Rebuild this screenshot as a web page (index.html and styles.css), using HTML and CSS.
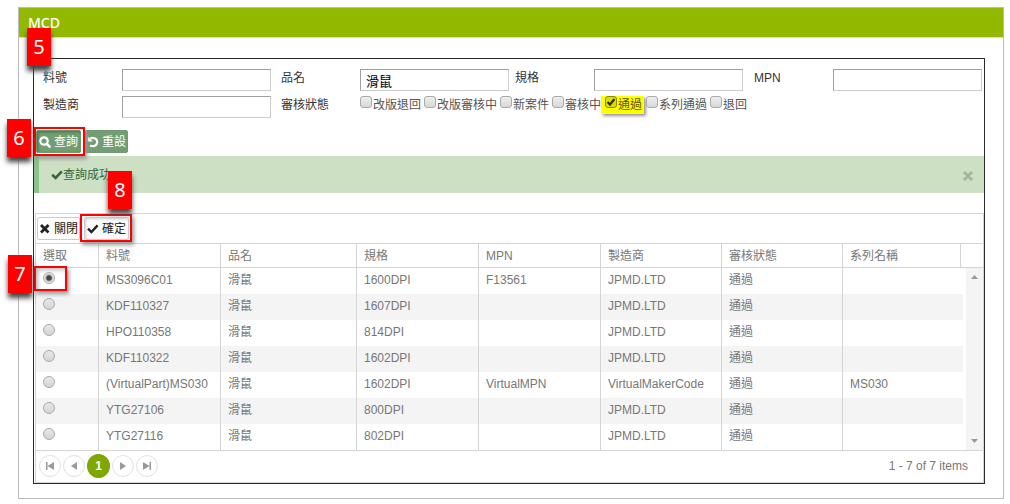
FILE: index.html
```html
<!DOCTYPE html>
<html lang="zh-Hant">
<head>
<meta charset="utf-8">
<title>MCD</title>
<link rel="stylesheet" href="styles.css">
</head>
<body>
<main class="panel">
  <h1 class="panel-title">MCD</h1>
  <span class="step step-5">5</span>
  <div class="panel-body">
    <div class="frame">
      <form class="search">
        <label for="part">料號</label><input class="text" id="part" type="text">
        <label for="name">品名</label><input class="text" id="name" type="text" value="滑鼠">
        <label for="spec">規格</label><input class="text" id="spec" type="text">
        <label for="mpn">MPN</label><input class="text" id="mpn" type="text">
        <label for="maker">製造商</label><input class="text" id="maker" type="text">
        <span id="status-label">審核狀態</span>
        <div class="checks" role="group" aria-labelledby="status-label">
          <label class="check"><input type="checkbox">改版退回</label>
          <label class="check"><input type="checkbox">改版審核中</label>
          <label class="check"><input type="checkbox">新案件</label>
          <label class="check"><input type="checkbox">審核中</label>
          <label class="check marked"><input type="checkbox" checked>通過</label>
          <label class="check"><input type="checkbox">系列通過</label>
          <label class="check"><input type="checkbox">退回</label>
        </div>
      </form>
      <div class="actions">
        <div class="anchor">
          <button class="btn green roomy" type="button"><svg class="icon" viewBox="0 0 12 12"><circle cx="5" cy="5" r="3.7" fill="none" stroke="currentColor" stroke-width="2.2"/><path d="M7.800 7.800l2.800 2.800" stroke="currentColor" stroke-width="2.600" stroke-linecap="round"/></svg>查詢</button>
          <span class="ring"></span><span class="step step-6">6</span>
        </div>
        <button class="btn green" type="button"><svg class="icon" viewBox="0 0 12 12"><path d="M3 2.600C5.700.9 10.200 2 10.200 6c0 3.600-3.800 5-7.200 3.500" fill="none" stroke="currentColor" stroke-width="2.200"/><path d="M.8.6v5h5z" fill="currentColor"/></svg>重設</button>
      </div>
      <div class="alert" role="status">
        <svg class="icon" viewBox="0 0 12 12"><path d="M1.200 5.700l3.400 3.300 6.200-6.600" fill="none" stroke="currentColor" stroke-width="2.600"/></svg>
        <span class="alert-text">查詢成功</span>
        <button class="close" type="button" aria-label="關閉訊息"><svg class="icon" viewBox="0 0 12 12"><path d="M2 2l8 8M10 2l-8 8" stroke="currentColor" stroke-width="2.800"/></svg></button>
      </div>
      <section class="grid">
        <div class="toolbar">
          <button class="btn white" type="button"><svg class="icon" viewBox="0 0 12 12"><path d="M2 2l7.500 7.500M9.500 2L2 9.500" stroke="currentColor" stroke-width="2.800"/></svg>關閉</button>
          <div class="anchor">
            <button class="btn white roomy" type="button"><svg class="icon" viewBox="0 0 12 12"><path d="M1 5.700l3.400 3.300 6.200-6.600" fill="none" stroke="currentColor" stroke-width="2.400"/></svg>確定</button>
            <span class="ring ring-ok"></span><span class="step step-8">8</span>
          </div>
        </div>
        <div class="grid-head">
          <table>
            <colgroup><col class="c-pick"><col class="c-part"><col class="c-name"><col class="c-mid"><col class="c-mid"><col class="c-low"><col class="c-low"><col></colgroup>
            <thead><tr><th>選取</th><th>料號</th><th>品名</th><th>規格</th><th>MPN</th><th>製造商</th><th>審核狀態</th><th>系列名稱</th></tr></thead>
          </table>
        </div>
        <div class="grid-body">
          <table>
            <colgroup><col class="c-pick"><col class="c-part"><col class="c-name"><col class="c-mid"><col class="c-mid"><col class="c-low"><col class="c-low"><col></colgroup>
            <tbody>
              <tr><td><div class="pick"><input type="radio" name="row" aria-label="MS3096C01" checked><span class="ring ring-radio"></span><span class="step step-7">7</span></div></td><td>MS3096C01</td><td>滑鼠</td><td>1600DPI</td><td>F13561</td><td>JPMD.LTD</td><td>通過</td><td></td></tr>
              <tr><td><div class="pick"><input type="radio" name="row" aria-label="KDF110327"></div></td><td>KDF110327</td><td>滑鼠</td><td>1607DPI</td><td></td><td>JPMD.LTD</td><td>通過</td><td></td></tr>
              <tr><td><div class="pick"><input type="radio" name="row" aria-label="HPO110358"></div></td><td>HPO110358</td><td>滑鼠</td><td>814DPI</td><td></td><td>JPMD.LTD</td><td>通過</td><td></td></tr>
              <tr><td><div class="pick"><input type="radio" name="row" aria-label="KDF110322"></div></td><td>KDF110322</td><td>滑鼠</td><td>1602DPI</td><td></td><td>JPMD.LTD</td><td>通過</td><td></td></tr>
              <tr><td><div class="pick"><input type="radio" name="row" aria-label="(VirtualPart)MS030"></div></td><td>(VirtualPart)MS030</td><td>滑鼠</td><td>1602DPI</td><td>VirtualMPN</td><td>VirtualMakerCode</td><td>通過</td><td>MS030</td></tr>
              <tr><td><div class="pick"><input type="radio" name="row" aria-label="YTG27106"></div></td><td>YTG27106</td><td>滑鼠</td><td>800DPI</td><td></td><td>JPMD.LTD</td><td>通過</td><td></td></tr>
              <tr><td><div class="pick"><input type="radio" name="row" aria-label="YTG27116"></div></td><td>YTG27116</td><td>滑鼠</td><td>802DPI</td><td></td><td>JPMD.LTD</td><td>通過</td><td></td></tr>
            </tbody>
          </table>
          <div class="scrollbar">
            <svg viewBox="0 0 7 4"><path d="M0 4L3.500 0 7 4z" fill="#999"/></svg>
            <svg viewBox="0 0 7 4"><path d="M0 0l3.500 4L7 0z" fill="#999"/></svg>
          </div>
        </div>
        <nav class="pager">
          <button class="page" type="button" aria-label="First"><svg viewBox="0 0 10 8"><path d="M1 0h1.500v8H1zM9 0v8L2.500 4z"/></svg></button>
          <button class="page" type="button" aria-label="Previous"><svg viewBox="0 0 10 8"><path d="M8 0v8L2 4z"/></svg></button>
          <button class="page current" type="button">1</button>
          <button class="page" type="button" aria-label="Next"><svg viewBox="0 0 10 8"><path d="M2 0v8l6-4z"/></svg></button>
          <button class="page" type="button" aria-label="Last"><svg viewBox="0 0 10 8"><path d="M1 0v8l6.500-4zM7.500 0H9v8H7.500z"/></svg></button>
          <span class="count">1 - 7 of 7 items</span>
        </nav>
      </section>
    </div>
  </div>
</main>
</body>
</html>
```

FILE: styles.css
```css
* { box-sizing: border-box; }
body {
  margin: 0;
  padding: 7px 6px 5px 18px;
  background: #fff;
  color: #333;
  font: 12px/18px "Liberation Sans", "Noto Sans CJK TC", sans-serif;
}
button, input { font: inherit; margin: 0; }

.panel { position: relative; border: 1px solid #bbb; }
.panel-title {
  margin: 0;
  padding: 0 9px;
  background: #92b900;
  border-bottom: 1px solid #ddd;
  color: #fff;
  font: 500 14px/29px "Noto Sans", sans-serif;
}
.panel-body { padding: 20px 18px 14px 14px; }
.frame { border: 1px solid #2b2b2b; }

.search {
  display: grid;
  grid-template-columns: 79px 159fr 79px 155fr 79px 160fr 79px 149fr;
  row-gap: 5px;
  padding: 10px 2px 0 9px;
}
.text {
  width: 149px;
  height: 22px;
  padding: 1px 5px 0;
  border: 1px solid;
  border-color: #a0a0a0 #ccc #ccc #a0a0a0;
  background: #fff;
  color: #000;
  font-size: 13px;
}
.checks { grid-column: 4 / -1; display: flex; align-items: flex-start; gap: 3px; color: #555; }
.check { display: flex; align-items: flex-start; white-space: nowrap; }
.check input {
  appearance: none;
  width: 12px;
  height: 12px;
  margin-right: 1px;
  border: 1px solid #aaa;
  border-radius: 3px;
  background: linear-gradient(#eee, #d8d8d8);
}
.marked {
  margin: 0 -1px 0 -3px;
  padding: 0 2px 0 4px;
  background: #ff0;
  box-shadow: 2px 2px 3px #999;
  color: #555500;
}
.marked input {
  border-color: #8a8a00;
  background: #dddd00 url("data:image/svg+xml,%3Csvg xmlns='http://www.w3.org/2000/svg' viewBox='0 0 10 10'%3E%3Cpath d='M1.500 5l2.500 2.500L8.500 2' fill='none' stroke='%23333300' stroke-width='2.200'/%3E%3C/svg%3E");
}

.actions { display: flex; gap: 4px; padding: 12px 2px 3px; }
.anchor { position: relative; display: flex; }
.btn {
  display: flex;
  align-items: center;
  gap: 3px;
  height: 23px;
  padding: 0 1px;
  border: 1px solid;
  border-radius: 2px;
  white-space: nowrap;
}
.roomy { padding: 0 2px; }
.green { border-color: #6d9a6e; background: #739e73; color: #fff; }
.anchor .green { box-shadow: inset 1px 1px 3px #496b49; }
.icon { width: 12px; height: 12px; flex: none; }
.white { border-color: #ccc; background: #fff; color: #222; }
.anchor .white { box-shadow: inset 1px 1px 3px #ccc; }

.alert {
  display: flex;
  align-items: center;
  height: 37px;
  padding: 0 10px 0 12px;
  border-left: 5px solid #8ac38b;
  background: #cde0c4;
  color: #356635;
}
.close { margin-left: auto; padding: 2px 0 0; border: 0; background: none; color: #a2b49b; line-height: 0; }

.grid { margin: 20px 0 0 1px; border: 1px solid #d5d5d5; color: #777; }
.toolbar { display: flex; gap: 4px; padding: 3px 1px; }
.grid-head { padding-right: 22px; border: solid #d5d5d5; border-width: 1px 0; }
table { width: 100%; border-collapse: separate; border-spacing: 0; table-layout: fixed; }
.c-pick { width: 62px; }
.c-part { width: 122px; }
.c-name { width: 136px; }
.c-mid { width: 122px; }
.c-low { width: 121px; }
th, td { padding: 0 7px; border-left: 1px solid #d5d5d5; text-align: left; font-weight: 400; white-space: nowrap; }
th:first-child, td:first-child { border-left: 0; }
th:last-child { border-right: 1px solid #d5d5d5; }
th { height: 23px; }
td { height: 26px; padding-bottom: 2px; }
tr:nth-child(even) td { background: #f4f4f4; }
.pick { position: relative; display: flex; padding-bottom: 4px; }
.pick input {
  appearance: none;
  width: 12px;
  height: 12px;
  border: 1px solid #aaa;
  border-radius: 50%;
  background: linear-gradient(#e8e8e8, #d4d4d4);
}
.pick input:checked { background: radial-gradient(circle, #444 0 2px, #e4e4e4 4px); }
.grid-body { display: flex; gap: 3px; }
.scrollbar {
  flex: none;
  display: flex;
  flex-direction: column;
  justify-content: space-between;
  align-items: center;
  width: 17px;
  padding: 7px 0;
  background: #f4f4f4;
}
.scrollbar svg { width: 7px; height: 4px; }

.pager { display: flex; align-items: center; gap: 2px; height: 32px; padding: 0 15px 1px 3px; border-top: 1px solid #d5d5d5; }
.page {
  display: flex;
  align-items: center;
  justify-content: center;
  width: 22px;
  height: 22px;
  padding: 0;
  border: 1px solid #e2e2e2;
  border-radius: 50%;
  background: #fff;
}
.page svg { width: 10px; height: 8px; fill: #999; }
.current { width: 23px; height: 24px; border-color: #7ea700; background: #7ea700; color: #fff; font-weight: 700; }
.count { margin-left: auto; }

/* Numbered walkthrough markers */
.step {
  position: absolute;
  z-index: 2;
  width: 24px;
  height: 38px;
  background: #f00;
  box-shadow: 0 5px 5px #444;
  color: #fff;
  font: 400 20px/38px "Noto Sans", sans-serif;
  text-align: center;
}
.step-5 { left: 8px; top: 20px; }
.step-6 { left: -29px; top: -11px; }
.step-7 { left: -35px; top: -17px; }
.step-8 { left: 24px; top: -46px; }
.ring {
  position: absolute;
  z-index: 1;
  inset: -3px -4px -3px -2px;
  border: 2px solid #f00;
  box-shadow: 2px 3px 4px #999;
  pointer-events: none;
}
.ring-ok { inset: -3px -3px -2px -4px; }
.ring-radio { inset: auto auto auto -9px; top: -6px; width: 33px; height: 25px; box-shadow: 2px 3px 4px #999, inset 2px 2px 4px #bbb; }
```
